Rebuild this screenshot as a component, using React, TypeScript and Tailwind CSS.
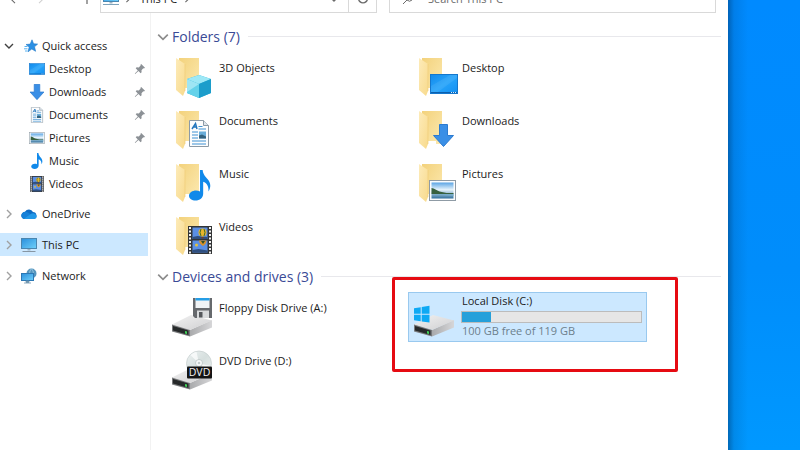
import React from 'react';

const Svg = ({ box, className, children }: { box: string; className: string; children: React.ReactNode }) => (
  <svg viewBox={box} className={`shrink-0 ${className}`} aria-hidden="true">
    {children}
  </svg>
);

const Chevron = ({ className }: { className: string }) => (
  <Svg box="0 0 10 10" className={className}>
    <path d="M1 3l4 4 4-4" fill="none" stroke="currentColor" strokeWidth="1.4" />
  </Svg>
);

const PinIcon = () => (
  <Svg box="0 0 12 12" className="w-3 h-3 text-[#8c9196]">
    <path d="M7.2 1l3.8 3.8-1 .6-.7-.1-1.8 1.9.1 2-1 1L4.5 8.1 1.2 11l-.4-.4L3.8 7.4 1.7 5.3l1-1 2.1.1 1.8-1.8-.1-.9z" fill="currentColor" />
  </Svg>
);

/* Gradients shared by every icon on the page */
const IconDefs = () => (
  <svg className="absolute w-0 h-0" aria-hidden="true">
    <defs>
      <linearGradient id="folderBack" x1="0" y1="0" x2="1" y2="1">
        <stop offset="0" stopColor="#f3d27c" />
        <stop offset="1" stopColor="#fce9b0" />
      </linearGradient>
      <linearGradient id="folderFront" x1="0" y1="0" x2="1" y2="1">
        <stop offset="0" stopColor="#fdebb9" />
        <stop offset="1" stopColor="#f8da8c" />
      </linearGradient>
      <linearGradient id="screen" x1="0" y1="0" x2="1" y2="1">
        <stop offset="0" stopColor="#1389ea" />
        <stop offset="0.5" stopColor="#27a4fa" />
        <stop offset="1" stopColor="#128ff2" />
      </linearGradient>
      <linearGradient id="pcScreen" x1="0" y1="0" x2="1" y2="1">
        <stop offset="0" stopColor="#2a8fdc" />
        <stop offset="1" stopColor="#6fd0fa" />
      </linearGradient>
      <linearGradient id="driveTop" x1="0" y1="0" x2="1" y2="1">
        <stop offset="0" stopColor="#f2f2f2" />
        <stop offset="1" stopColor="#cfcfd1" />
      </linearGradient>
      <linearGradient id="driveSide" x1="0" y1="0" x2="1" y2="0">
        <stop offset="0" stopColor="#a9aaac" />
        <stop offset="1" stopColor="#d6d6d8" />
      </linearGradient>
      <linearGradient id="photo" x1="0" y1="0" x2="0" y2="1">
        <stop offset="0" stopColor="#5aa4e4" />
        <stop offset="0.45" stopColor="#e6f3fb" />
        <stop offset="1" stopColor="#2f6f9c" />
      </linearGradient>
      <linearGradient id="disc" x1="0" y1="0" x2="1" y2="1">
        <stop offset="0" stopColor="#eef3f3" />
        <stop offset="0.5" stopColor="#d6dfde" />
        <stop offset="1" stopColor="#edf1f1" />
      </linearGradient>
    </defs>
  </svg>
);

/* Drawings, each in its own coordinate box, used both large and small */
const ScreenArt = () => (
  <g>
    <rect x="0.5" y="0.5" width="27" height="19" fill="url(#screen)" stroke="#1577cc" />
    <path d="M1 18V12L20 1h7v3L8 18z" fill="#fff" opacity="0.08" />
    <path d="M1 18.5h26" stroke="#0b5fae" />
    <path d="M21 18.5h1M23 18.5h1M25 18.5h1" stroke="#d7efff" />
  </g>
);

const ArrowArt = () => (
  <path d="M7.5.5h8v11h6l-10 11-10-11h6z" fill="#3a8fe6" stroke="#2c7bd0" />
);

const DocumentArt = () => (
  <g>
    <path d="M.5.5h14l5 5v21H.5z" fill="#fdfdfd" stroke="#8c9aa6" />
    <path d="M14.5.5v5h5" fill="#dfe6ec" stroke="#8c9aa6" />
    <path d="M3 9l3.5-5.500L8 9M4.500 7h3" fill="none" stroke="#2476bd" strokeWidth="1.5" />
    <path d="M9.500 6.500h4M9.500 9H17M3 12h6M3 15h6M3 18h6M3 21h14M3 24h14" stroke="#3f92d3" strokeWidth="1.2" />
    <rect x="10" y="11.5" width="7" height="7" fill="#69add9" />
    <path d="M10 18.500v-3l3-1 4 2v2z" fill="#34627e" />
  </g>
);

const NoteArt = () => (
  <path
    d="M10.500 0H13c.4 4.500 2.800 6.200 5 9 2.600 3.300 3.300 7.300.5 11.500.5-4.500-1.500-8.200-5-9.200v11.200c0 4-3.300 6.500-7.300 6.500C2.800 29 0 27.200 0 24.500c0-2.900 3.200-5 6.700-5 1.400 0 2.700.3 3.800.9z"
    fill="#1089ea"
  />
);

const PhotoArt = () => (
  <g>
    <rect x="0.5" y="0.5" width="26" height="20" fill="#fbfcfd" stroke="#8f9ba5" />
    <rect x="2.5" y="2.5" width="22" height="16" fill="url(#photo)" />
    <path d="M2.5 8c3 0 5 2.500 8 3.500l7 1.500h7v1h-22z" fill="#38613f" />
    <path d="M2.5 14h22v2l-12-1z" fill="#75abc8" />
  </g>
);

const FilmArt = () => (
  <g>
    <rect width="24" height="28" fill="#333536" />
    <path d="M2 1v27M22 1v27" stroke="#f2f2f2" strokeWidth="2" strokeDasharray="2 1.5" />
    <rect x="4.5" y="1.5" width="15" height="11.5" fill="#5b8fe4" />
    <rect x="4.5" y="14.5" width="15" height="12" fill="#5b8fe4" />
    <path d="M4.5 11l5-1 10 1v2h-15zM4.5 24l6-1 9 1.500v2h-15z" fill="#2f4f80" />
    <circle cx="14.5" cy="6.5" r="4" fill="#e8b62c" />
    <path d="M13 3q-2 3.500 0 7M16 3q2 3.500 0 7" stroke="#3f6a2e" fill="none" />
    <path d="M13.5 11h2v1.500h-2z" fill="#7a3e1d" />
    <path d="M11 14.500h7.500q0 3-3.500 5.500-4-2.500-4-5.500z" fill="#d9912a" />
    <path d="M13 15h4l-2 3z" fill="#2f4f2b" />
    <circle cx="8.5" cy="19" r="1.5" fill="#e4c23b" />
  </g>
);

const CubeArt = () => (
  <g>
    <path d="M12 0l12 4v14l-12 5-12-5V4z" fill="#29b2d8" />
    <path d="M12 0l12 4-12 5L0 4z" fill="#9ee8f6" />
    <path d="M0 4l12 5v14L0 18z" fill="#64d2ea" />
    <path d="M0 4l12 5L0 17z" fill="#c4f2fa" opacity="0.6" />
    <path d="M12 9l12-5v14l-12 5z" fill="#1c9dcb" />
  </g>
);

const FolderIcon = ({ children }: { children: React.ReactNode }) => (
  <Svg box="0 0 44 44" className="w-11 h-11">
    <path d="M7 3h20v33H7z" fill="url(#folderBack)" />
    <path d="M12 33h9v4h-9z" fill="#fff" />
    <path d="M4 3l9 6v27l-2 5-7-6z" fill="url(#folderFront)" />
    <path d="M13 9v27" fill="none" stroke="#efcd78" strokeWidth="0.7" />
    {children}
  </Svg>
);

const DriveBody = () => (
  <g>
    <path d="M18 32l22-10v7.500L18 38.500z" fill="url(#driveSide)" />
    <path d="M0 26.500L19 17l21 5.500L18 32z" fill="url(#driveTop)" />
    <path d="M0 26.500L18 32v6.500L0 33.500z" fill="#77797b" />
    <path d="M1 28l15.500 4.500v4.500L1 32.500z" fill="#26292a" />
    <path d="M13 33l2 .5V36l-2-.5z" fill="#3fd257" />
  </g>
);

const FloppyDrive = () => (
  <Svg box="0 -3 40 43" className="w-10 h-[43px]">
    <DriveBody />
    <path d="M21 0h19v20H23l-2-2z" fill="#66696d" />
    <path d="M23.500 0h14v10h-14z" fill="#f0f3f5" />
    <path d="M23.500 0h14v2.500h-14z" fill="#259ee6" />
    <path d="M25 12.500h12V20H25z" fill="#d8dadc" />
    <path d="M27 14h3.500v5.500H27z" fill="#55585c" />
  </Svg>
);

const DvdDrive = () => (
  <Svg box="0 -3 40 43" className="w-10 h-[43px]">
    <DriveBody />
    <circle cx="27" cy="12.5" r="12.5" fill="url(#disc)" stroke="#c4cdcd" strokeWidth="0.7" />
    <path d="M27 12.500L18.500 4a12 12 0 0 1 6-3.200zM27 12.500l9 8.500a12 12 0 0 0 3-6z" fill="#fff" opacity="0.7" />
    <circle cx="27" cy="12" r="3.5" fill="#f8fafa" stroke="#b3bdbd" strokeWidth="0.7" />
    <circle cx="27" cy="12" r="1.3" fill="#c3cccc" />
    <rect x="15" y="15.5" width="25" height="12" rx="1" fill="#141414" />
    <text x="27.5" y="25.3" textAnchor="middle" fontSize="10.5" fill="#f4f4f4" fontFamily="Open Sans, sans-serif">DVD</text>
  </Svg>
);

const SystemDrive = () => (
  <Svg box="0 0 40 40" className="w-10 h-10">
    <g transform="translate(0 -3)">
      <DriveBody />
    </g>
    <path d="M0 7.200l6.700-1v6.500H0zM7.700 6l7.800-1.200v7.900H7.700zM0 13.700h6.700v6.500l-6.700-1zM7.700 13.700h7.800v7.900l-7.800-1.200z" fill="#0ea9f4" />
  </Svg>
);

const StarIcon = () => (
  <Svg box="0 0 14 14" className="w-[14px] h-[14px]">
    <path d="M8 .8l1.600 4 4 .3-3.100 2.700 1.100 4.500L7.800 10 4 12.800l1.200-4.700L2 5.500l4.200-.4z" fill="#2b90e4" stroke="#2279c8" strokeWidth="0.6" />
    <path d="M.5 7.500h3M0 9.800h3.500M1 12h2.500" stroke="#59b3f2" />
  </Svg>
);

const CloudIcon = () => (
  <Svg box="0 0 16 12" className="w-4 h-3">
    <path d="M4.5 11A3.500 3.500 0 0 1 1 5.500a4 4 0 0 1 3-1.800A4.600 4.600 0 0 1 12 4a3.600 3.600 0 0 1 1 7z" fill="#0f6cc4" />
    <path d="M4 3.700a4 4 0 0 1 3 .8L12.500 8l-9 3A3.500 3.500 0 0 1 .5 7.500 4 4 0 0 1 4 3.700z" fill="#1580d8" />
    <path d="M3 10.700l6.500-4.400A4 4 0 0 1 15.800 8 3 3 0 0 1 13 11H4.500z" fill="#2298e8" />
  </Svg>
);

const MonitorIcon = () => (
  <Svg box="0 0 16 16" className="w-4 h-4">
    <rect x="0.5" y="1.5" width="15" height="10" fill="url(#pcScreen)" stroke="#4a86b0" />
    <path d="M6.500 12h3v1.500h-3z" fill="#9fb4c4" />
    <path d="M1.5 14.500h13" stroke="#8796a3" />
  </Svg>
);

const NetworkIcon = () => (
  <Svg box="0 0 16 16" className="w-4 h-4">
    <circle cx="10.5" cy="5.5" r="5" fill="#5595bd" />
    <path d="M10.500.5q-4 5 0 10M10.500.5q4 5 0 10" stroke="#a5d3ea" fill="none" strokeWidth="0.7" />
    <rect x="0.5" y="5.5" width="12" height="7" fill="url(#pcScreen)" stroke="#2c78b4" />
    <path d="M5 13h3v1.500H5zM3 15h7" fill="#6f94ae" stroke="#6f94ae" strokeWidth="0.8" />
  </Svg>
);

const quickLinks = [
  { name: 'Desktop', pinned: true, icon: <Svg box="0 0 28 20" className="w-4 h-3"><ScreenArt /></Svg> },
  { name: 'Downloads', pinned: true, icon: <Svg box="0 0 23 23" className="w-4 h-4"><ArrowArt /></Svg> },
  { name: 'Documents', pinned: true, icon: <Svg box="0 0 20 27" className="w-4 h-4"><DocumentArt /></Svg> },
  { name: 'Pictures', pinned: true, icon: <Svg box="0 0 27 21" className="w-4 h-3"><PhotoArt /></Svg> },
  { name: 'Music', pinned: false, icon: <Svg box="0 0 21 29" className="w-4 h-4"><NoteArt /></Svg> },
  { name: 'Videos', pinned: false, icon: <Svg box="0 0 24 28" className="w-4 h-4"><FilmArt /></Svg> },
];

const places = [
  { name: 'OneDrive', icon: <CloudIcon />, active: false },
  { name: 'This PC', icon: <MonitorIcon />, active: true },
  { name: 'Network', icon: <NetworkIcon />, active: false },
];

const folders = [
  { name: '3D Objects', art: <g transform="translate(15 20)"><CubeArt /></g> },
  { name: 'Desktop', art: <g transform="translate(15 19)"><ScreenArt /></g> },
  { name: 'Documents', art: <g transform="translate(17 12)"><DocumentArt /></g> },
  { name: 'Downloads', art: <g transform="translate(17 16)"><ArrowArt /></g> },
  { name: 'Music', art: <g transform="translate(17 9) scale(1.05)"><NoteArt /></g> },
  { name: 'Pictures', art: <g transform="translate(14 19)"><PhotoArt /></g> },
  { name: 'Videos', art: <g transform="translate(16 12)"><FilmArt /></g> },
];

const Toolbar = () => (
  <header className="h-[13px] flex items-end overflow-hidden pr-3 text-[#6b6b6b]">
    <nav className="w-[100px] shrink-0 h-7 flex items-center justify-between pl-[10px] pr-2">
      <button aria-label="Back">
        <Svg box="0 0 12 12" className="w-[10px] h-[10px]">
          <path d="M12 6H1M6 1L1 6l5 5" fill="none" stroke="currentColor" strokeWidth="1.3" />
        </Svg>
      </button>
      <button aria-label="Forward" className="text-[#d0d0d0]">
        <Svg box="0 0 12 12" className="w-[10px] h-[10px]">
          <path d="M0 6h11M6 1l5 5-5 5" fill="none" stroke="currentColor" strokeWidth="1.3" />
        </Svg>
      </button>
      <button aria-label="Up" className="ml-6">
        <Svg box="0 0 12 12" className="w-[10px] h-[10px]">
          <path d="M6 12V1M1 6l5-5 5 5" fill="none" stroke="currentColor" strokeWidth="1.5" />
        </Svg>
      </button>
    </nav>
    <div className="flex-1 h-7 flex items-center border border-[#d9d9d9] pl-[2px]">
      <Svg box="0 0 16 14" className="w-4 h-[14px]">
        <rect x="0.5" y="0.5" width="15" height="9" fill="url(#pcScreen)" stroke="#4a86b0" />
        <path d="M6.500 10h3v1.500h-3z" fill="#9fb4c4" />
        <path d="M0 12.500h16" stroke="#7ea3bb" />
      </Svg>
      <Chevron className="w-2 h-2 -rotate-90 mx-[5px]" />
      <span className="text-[#222] ml-[3px]">This PC</span>
      <Chevron className="w-2 h-2 -rotate-90 ml-[6px]" />
      <button aria-label="Recent locations" className="ml-auto mr-[9px]">
        <Chevron className="w-[10px] h-[10px]" />
      </button>
      <button aria-label="Refresh" className="w-7 h-full border-l border-[#d9d9d9] flex items-center justify-center">
        <Svg box="0 0 12 12" className="w-3 h-3">
          <path d="M9.500 2.500a4.500 4.500 0 1 1-7 0M9.500 0v3h-3" fill="none" stroke="currentColor" strokeWidth="1.4" />
        </Svg>
      </button>
    </div>
    <label className="ml-3 w-[327px] h-7 flex items-center border border-[#d9d9d9] pl-3">
      <Svg box="0 0 12 12" className="w-3 h-3">
        <path d="M1 11l4-4M5 7a3.500 3.500 0 1 1 5 0 3.500 3.500 0 0 1-5 0z" fill="none" stroke="currentColor" />
      </Svg>
      <input aria-label="Search" placeholder="Search This PC" className="ml-[14px] flex-1 min-w-0 outline-none placeholder:text-[#6b6b6b]" />
    </label>
  </header>
);

const Sidebar = () => (
  <aside className="w-[151px] shrink-0 border-r border-[#f2f2f2] pt-[21px] pr-[2px]">
    <div className="pb-[7px]">
      <a href="#quick" className="h-[23px] flex items-center pl-1">
        <Chevron className="w-[10px] h-[10px] mr-[10px] text-[#404040]" />
        <StarIcon />
        <span className="ml-1">Quick access</span>
      </a>
      {quickLinks.map((link) => (
        <a key={link.name} href="#quick" className="h-[23px] flex items-center pl-[29px] pr-[2px]">
          {link.icon}
          <span className="ml-1 flex-1">{link.name}</span>
          {link.pinned && <PinIcon />}
        </a>
      ))}
    </div>
    <div className="flex flex-col gap-2">
      {places.map((place) => (
        <a
          key={place.name}
          href="#place"
          className={`h-[23px] flex items-center pl-1 ${place.active ? 'bg-[#cce8ff]' : ''}`}
        >
          <Chevron className="w-[10px] h-[10px] mr-[7px] -rotate-90 text-[#a0a0a0]" />
          {place.icon}
          <span className="ml-[5px]">{place.name}</span>
        </a>
      ))}
    </div>
  </aside>
);

const GroupTitle = ({ children }: { children: React.ReactNode }) => (
  <h2 className="h-[31px] flex items-center text-[14px] leading-5 text-[#3a4a96]">
    <Chevron className="w-3 h-3 mr-[3px] text-[#8c8c8c]" />
    {children}
    <span className="flex-1 h-px bg-[#e8e8ec] ml-2" />
  </h2>
);

const Tile = ({ name, icon }: { name: string; icon: React.ReactNode }) => (
  <div className="h-[50px] flex pl-[7px]">
    <div className="w-[47px] pt-[3px] shrink-0">{icon}</div>
    <span className="pt-2">{name}</span>
  </div>
);

const LocalDisk = () => (
  <div className="h-[50px] relative flex pl-[5px] bg-[#cce8ff] border border-[#99c9ef]">
    <div className="w-[47px] pt-2 shrink-0">
      <SystemDrive />
    </div>
    <div className="flex-1 pr-1">
      <div className="pl-px">Local Disk (C:)</div>
      <div className="h-3 mt-[2px] border border-[#bcbcbc] bg-[#e6e6e6]">
        <div className="h-full bg-[#26a0da]" style={{ width: `${((119 - 100) / 119) * 100}%` }} />
      </div>
      <div className="pl-px text-[#6d7f8c]">100 GB free of 119 GB</div>
    </div>
    {/* Highlight frame around the disk */}
    <div className="absolute -left-[17px] -top-4 w-[286px] h-[95px] border-3 border-[#e60b12] rounded-xs" />
  </div>
);

const App = () => (
  <div className="min-h-screen flex bg-white font-['Open_Sans',sans-serif] text-[11px] leading-4 text-[#1b1b1b]">
    <IconDefs />
    <div className="flex-1 min-w-0 flex flex-col">
      <Toolbar />
      <div className="flex-1 flex">
        <Sidebar />
        <main className="flex-1 min-w-0 pl-[6px] pr-[7px] pt-2">
          <GroupTitle>Folders (7)</GroupTitle>
          <div className="grid grid-cols-[239px_239px] gap-x-1 gap-y-[3px] pl-2">
            {folders.map((folder) => (
              <Tile key={folder.name} name={folder.name} icon={<FolderIcon>{folder.art}</FolderIcon>} />
            ))}
          </div>
          <GroupTitle>Devices and drives (3)</GroupTitle>
          <div className="grid grid-cols-[239px_239px] gap-x-1 gap-y-[3px] pl-2">
            <Tile name="Floppy Disk Drive (A:)" icon={<FloppyDrive />} />
            <LocalDisk />
            <Tile name="DVD Drive (D:)" icon={<DvdDrive />} />
          </div>
        </main>
      </div>
    </div>
    {/* Desktop wallpaper with the window's shadow on it */}
    <div className="w-[72px] shrink-0 flex bg-linear-to-b from-[#008aff] via-[#008dfb] via-60% to-[#0098ff]">
      <div className="w-5 bg-linear-to-r from-[#003a70]/50 via-[#003a70]/15 via-30% to-transparent" />
    </div>
  </div>
);

export default App;
